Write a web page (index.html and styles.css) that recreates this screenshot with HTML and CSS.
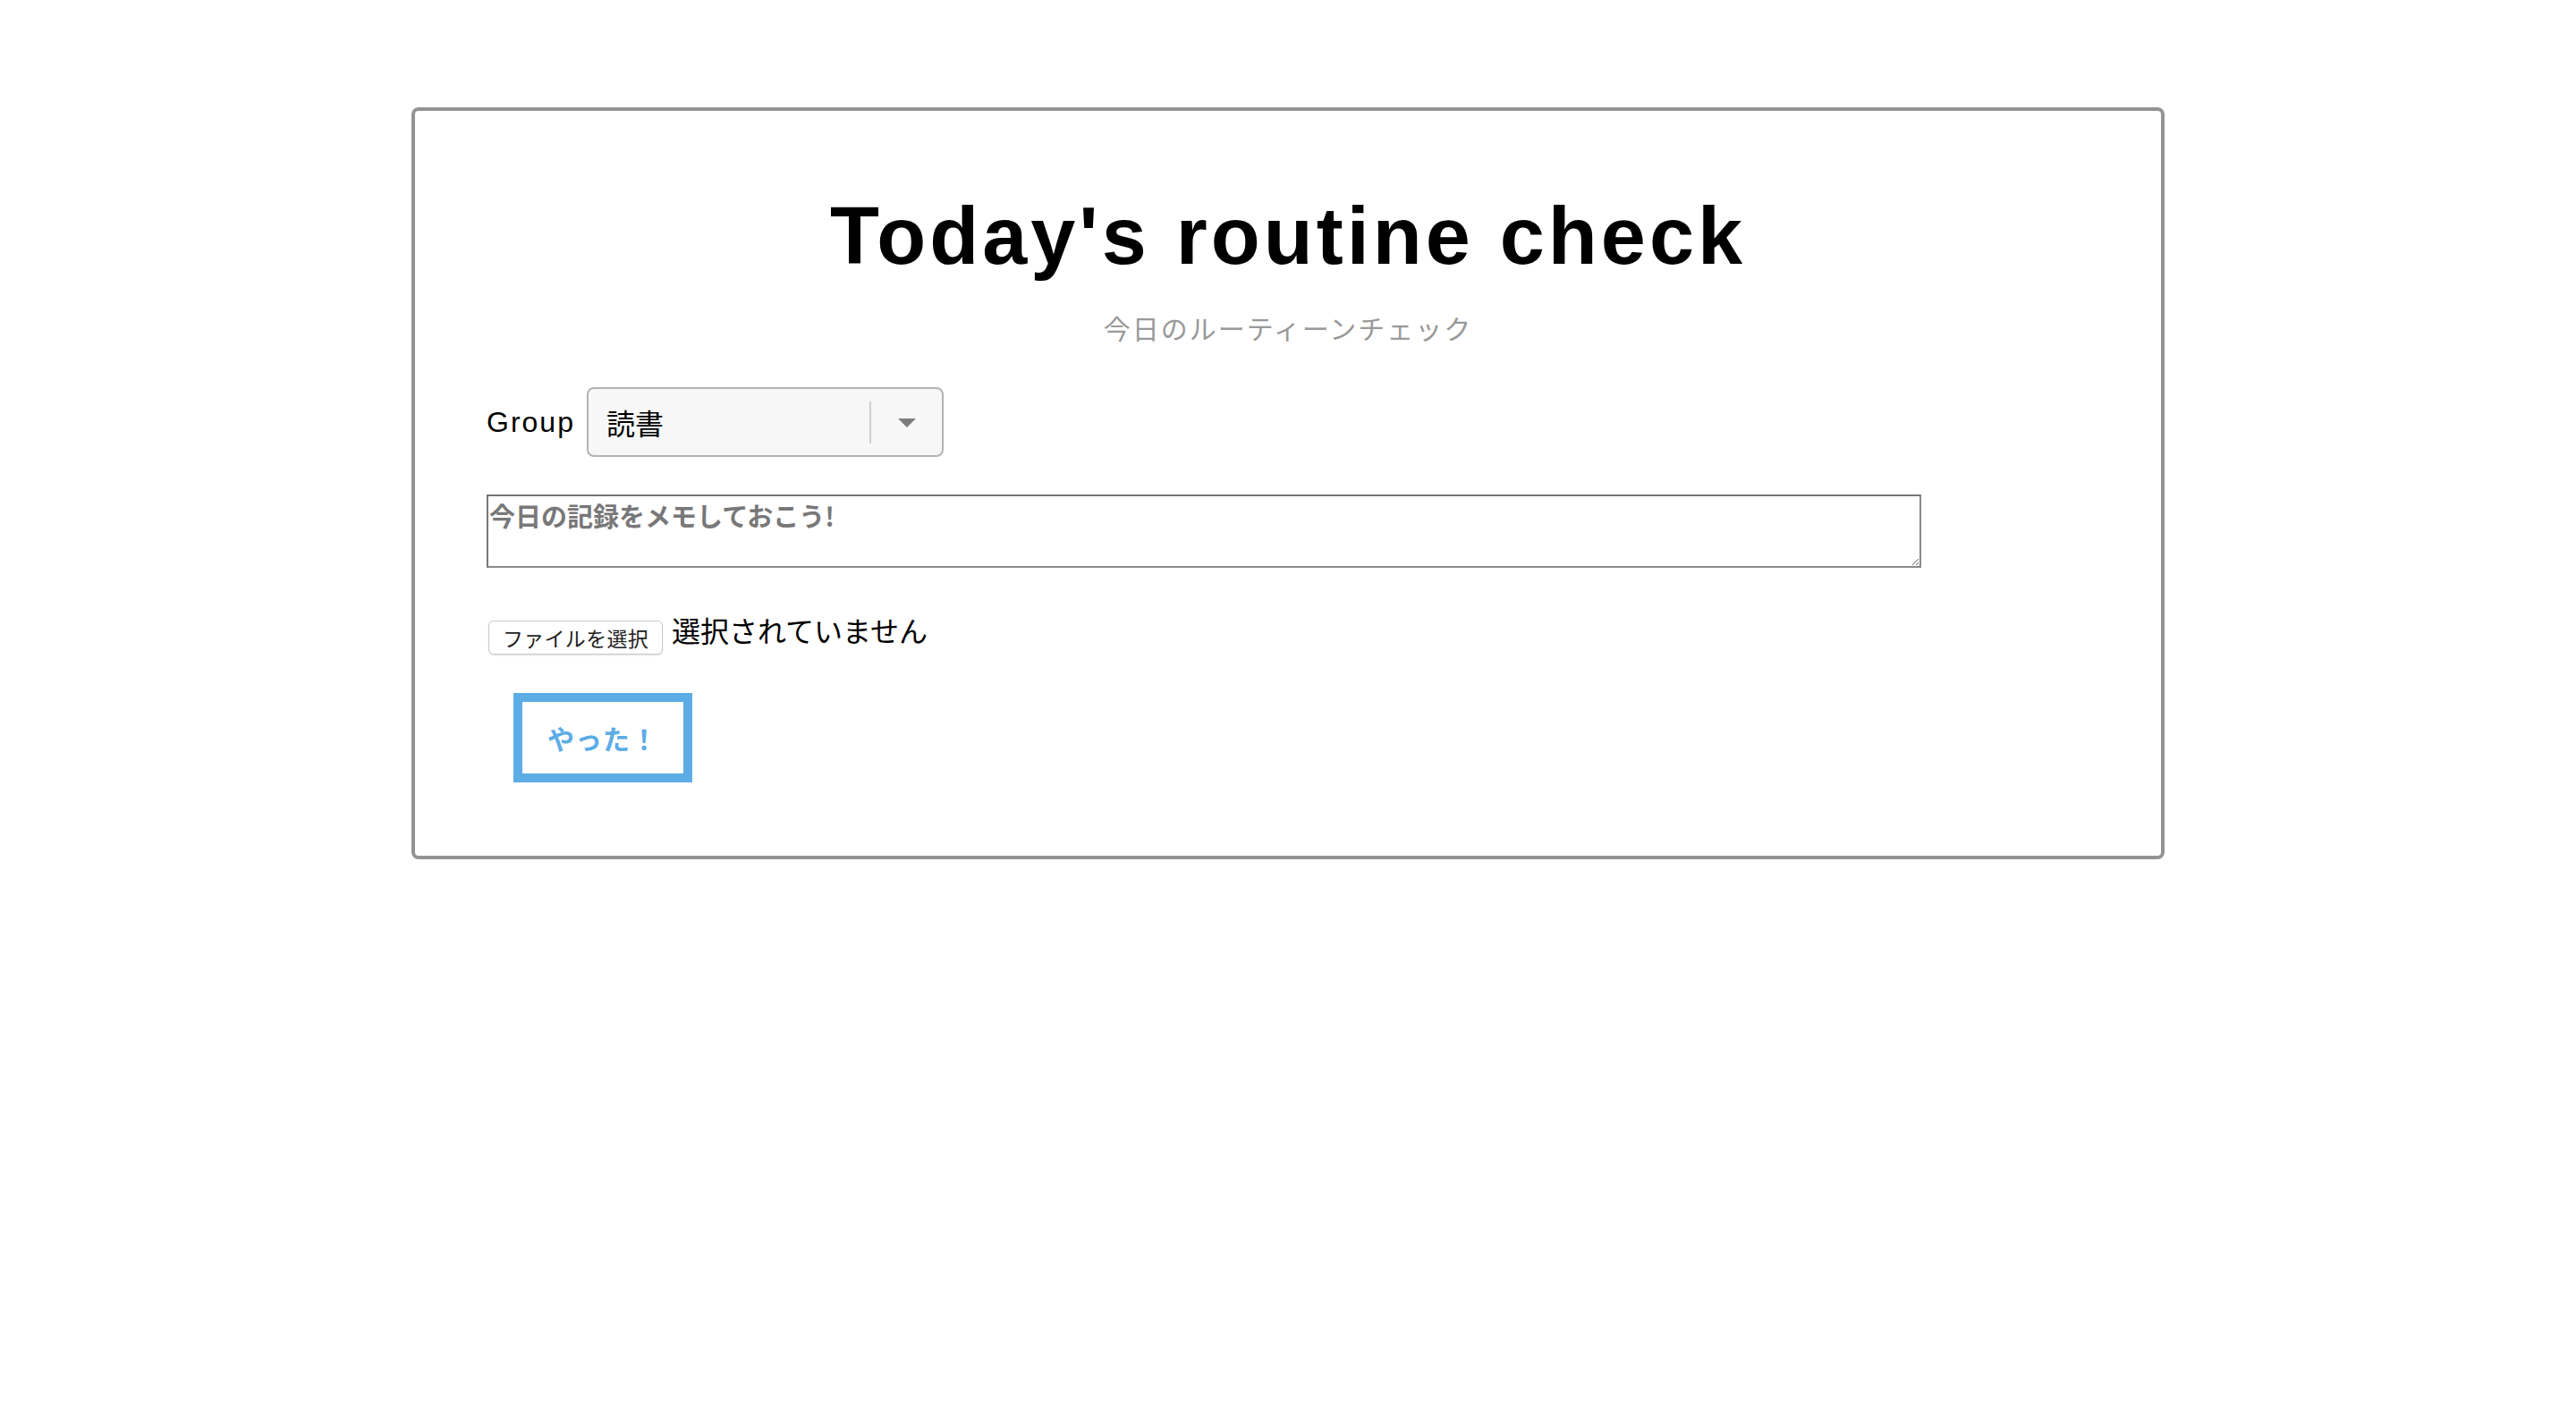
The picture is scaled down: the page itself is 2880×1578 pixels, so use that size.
FILE: index.html
```html
<!DOCTYPE html>
<html lang="ja">
<head>
<meta charset="utf-8">
<title>Today's routine check</title>
<link rel="stylesheet" href="styles.css">
</head>
<body>
<main class="card">
  <h1 class="title">Today's routine check</h1>
  <p class="subtitle">今日のルーティーンチェック</p>
  <form class="form">
    <div class="group-row">
      <label class="group-label">Group</label>
      <div class="select">
        <span class="select-value">読書</span>
        <span class="select-sep"></span>
        <span class="select-arrow"></span>
      </div>
    </div>
    <textarea class="memo" placeholder="今日の記録をメモしておこう!"></textarea>
    <div class="file-row">
      <label class="file-btn">ファイルを選択</label>
      <span class="file-status">選択されていません</span>
    </div>
    <button type="button" class="done-btn">やった！</button>
  </form>
</main>
</body>
</html>
```
FILE: styles.css
```css
* { box-sizing: border-box; }
html, body { margin: 0; padding: 0; background: #fff; }
body {
  font-family: "Liberation Sans", "Noto Sans CJK JP", sans-serif;
  color: #000;
}
.card {
  width: 1960px;
  margin: 120px auto 0;
  border: 4px solid #939393;
  border-radius: 8px;
  padding: 86px 80px 82px;
}
.title {
  margin: 0;
  font-family: "Liberation Sans", sans-serif;
  font-weight: 700;
  font-size: 90px;
  line-height: 108px;
  letter-spacing: 4px;
  text-align: center;
}
.subtitle {
  margin: 26px 0 0;
  font-family: "Noto Sans CJK JP", sans-serif;
  font-size: 30px;
  line-height: 45px;
  letter-spacing: 2px;
  color: #999;
  text-align: center;
}
.form {
  display: flex;
  flex-direction: column;
  align-items: flex-start;
}
.group-row {
  margin-top: 44px;
  display: flex;
  align-items: center;
  gap: 13px;
}
.group-label {
  font-family: "Liberation Sans", sans-serif;
  font-size: 32px;
  line-height: 32px;
  letter-spacing: 2px;
}
.select {
  width: 399px;
  height: 78px;
  border: 2px solid #b3b3b3;
  border-radius: 8px;
  background: #f7f7f7;
  display: flex;
  align-items: center;
  padding: 0 29px 0 20px;
}
.select-value {
  flex: 1;
  font-family: "Noto Sans CJK JP", sans-serif;
  font-size: 32px;
  line-height: 40px;
}
.select-sep {
  width: 2px;
  height: 47px;
  background: #cfcfcf;
  margin-right: 30px;
}
.select-arrow {
  width: 0;
  height: 0;
  border-left: 10px solid transparent;
  border-right: 10px solid transparent;
  border-top: 10px solid #7d7d7d;
  margin-top: 2px;
}
.memo {
  margin-top: 42px;
  width: 1604px;
  height: 82px;
  border: 2px solid #8a8a8a;
  border-top-color: #767676;
  border-left-color: #767676;
  padding: 0 1px;
  font-family: "Noto Sans CJK JP", sans-serif;
  font-size: 29px;
  font-weight: 700;
  resize: vertical;
  outline: none;
}
.memo::placeholder {
  color: #787878;
  opacity: 1;
}
.file-row {
  margin-top: 46px;
  display: flex;
  align-items: flex-start;
}
.file-btn {
  margin-top: 13px;
  margin-left: 2px;
  width: 195px;
  height: 38px;
  border: 1px solid #c9c9c9;
  border-radius: 6px;
  background: #fff;
  box-shadow: 0 1px 2px rgba(0,0,0,0.12);
  font-family: "Noto Sans CJK JP", sans-serif;
  font-size: 23px;
  line-height: 36px;
  letter-spacing: 0.3px;
  color: #222;
  text-align: center;
}
.file-status {
  margin-left: 10px;
  font-family: "Noto Sans CJK JP", sans-serif;
  font-size: 32px;
  line-height: 46px;
}
.done-btn {
  margin: 43px 0 0 30px;
  width: 200px;
  height: 100px;
  border: 10px solid #5cace6;
  background: #fff;
  color: #5cace6;
  font-family: "Noto Sans CJK JP", sans-serif;
  font-weight: 700;
  font-size: 30px;
  letter-spacing: 1px;
  padding: 0;
  cursor: pointer;
}
```
